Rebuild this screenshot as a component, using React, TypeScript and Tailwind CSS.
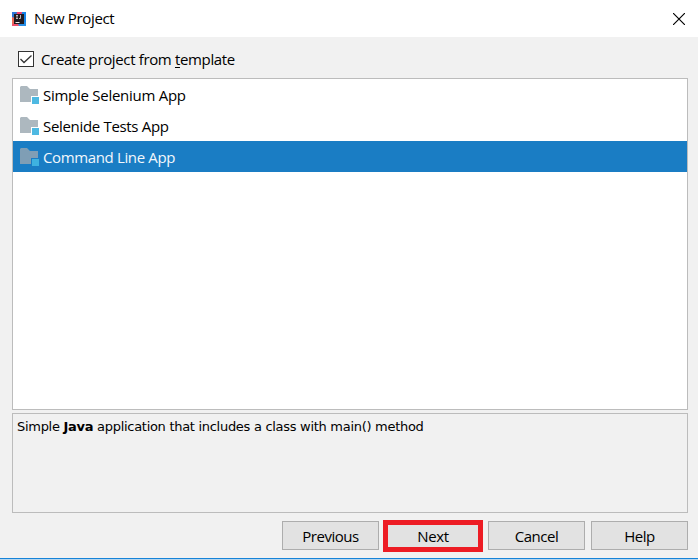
import type { ReactNode } from "react";

const templates = [
  { name: "Simple Selenium App", tracking: "tracking-[-0.27px]" },
  { name: "Selenide Tests App", tracking: "tracking-[-0.32px]" },
  { name: "Command Line App", tracking: "tracking-[-0.36px]" },
];

function AppLogo() {
  return (
    <svg className="h-[14px] w-[14px] shrink-0" viewBox="0 0 14 14">
      <path d="M0 0h7L4 8 0 9z" fill="#2c78d8" />
      <path d="M5 0h6l3 4-3 5H3z" fill="#ef3f70" />
      <path d="M10 0h4v14H8z" fill="#1583e8" />
      <path d="M0 6h5l4 8H0z" fill="#f0506b" />
      <path d="M0 5l3 1v5l-3 1z" fill="#ee6a55" />
      <path d="M5 10h9v4H7z" fill="#258de5" />
      <path d="M2 2h10v10H2z" fill="#211b20" />
      <path d="M4 3.5h2M5 3.5v3M4 6.5h2M8.5 3v3.5h-1.5" fill="none" stroke="#c9c5c8" strokeWidth="0.9" />
      <path d="M3.5 10.5h4" stroke="#eee" />
    </svg>
  );
}

function FolderIcon({ selected }: { selected: boolean }) {
  return (
    <svg className="mt-[7px] h-[18px] w-[19px] shrink-0" viewBox="0 0 19 18">
      <path d="M0 1L1 0h6l3 3h8v7h-7v6H0z" fill={selected ? "#7f9eb5" : "#adb8bf"} />
      <path d="M12 11h7v7h-7z" fill={selected ? "#3eb2e0" : "#4eb9e2"} />
    </svg>
  );
}

function Button({ children }: { children: ReactNode }) {
  return (
    <button className="mt-px flex h-[29px] w-[97px] items-center justify-center border border-[#adadad] bg-[#e2e2e2] pt-px text-[15px] leading-5 tracking-[-0.45px]">
      {children}
    </button>
  );
}

export default function App() {
  return (
    <div className="flex h-[560px] w-[698px] flex-col overflow-hidden bg-[#f1f1f1] font-['Open_Sans','Noto_Sans',sans-serif] text-[15px] text-black">
      <header className="flex h-[37px] shrink-0 items-center justify-between bg-white pr-[13px] pl-3">
        <div className="flex items-center gap-[8px]">
          <AppLogo />
          <h1 className="pb-[2px] leading-5 tracking-[-0.35px]">New Project</h1>
        </div>
        <button aria-label="Close">
          <svg className="h-3 w-3" viewBox="0 0 12 12" fill="none" stroke="#000" strokeWidth="1.15">
            <path d="M0 0l12 12M12 0L0 12" />
          </svg>
        </button>
      </header>
      <main className="flex h-[521px] shrink-0 flex-col pr-[10px] pl-3">
        <div className="flex h-[41px] items-center gap-[7px] pt-[3px] pl-[6px]">
          <span className="flex h-4 w-4 items-center justify-center border border-[#333] bg-white">
            <svg className="h-3 w-3 shrink-0" viewBox="0 0 12 12" fill="none" stroke="#333" strokeWidth="1.3">
              <path d="M0.5 6l3.5 3.5L11.5 2.5" />
            </svg>
          </span>
          <span className="leading-5 tracking-[-0.35px]">
            Create project from <span className="underline decoration-1 underline-offset-2">t</span>emplate
          </span>
        </div>
        <ul className="h-[332px] shrink-0 border border-[#bcbcbc] bg-white">
          {templates.map((template, index) => (
            <li
              key={template.name}
              className={`flex h-[31px] items-start gap-1 pl-[7px] ${index === 2 ? "bg-[#1a7dc4] text-[#f2f7fc]" : ""}`}
            >
              <FolderIcon selected={index === 2} />
              <span className={`mt-[6px] leading-5 ${template.tracking}`}>{template.name}</span>
            </li>
          ))}
        </ul>
        <section className="mt-[3px] h-[100px] shrink-0 border border-[#bcbcbc] px-1 pt-[5px] font-['DejaVu_Sans',sans-serif] text-[13px] leading-4 tracking-[-0.29px]">
          Simple <strong>Java</strong> application that includes a class with main() method
        </section>
        <div className="flex items-start justify-end pt-[7px]">
          <Button>Previous</Button>
          <button className="mr-[5px] ml-1 flex h-8 w-[100px] items-center justify-center border-[5px] border-[#ed1c24] bg-[#e2e2e2] leading-5 tracking-[-0.3px]">
            Next
          </button>
          <Button>Cancel</Button>
          <div className="ml-[6px]">
            <Button>Help</Button>
          </div>
        </div>
      </main>
      <footer className="h-[2px] shrink-0 border-t border-[#1683d8] bg-[#b5d5ee]" />
    </div>
  );
}
